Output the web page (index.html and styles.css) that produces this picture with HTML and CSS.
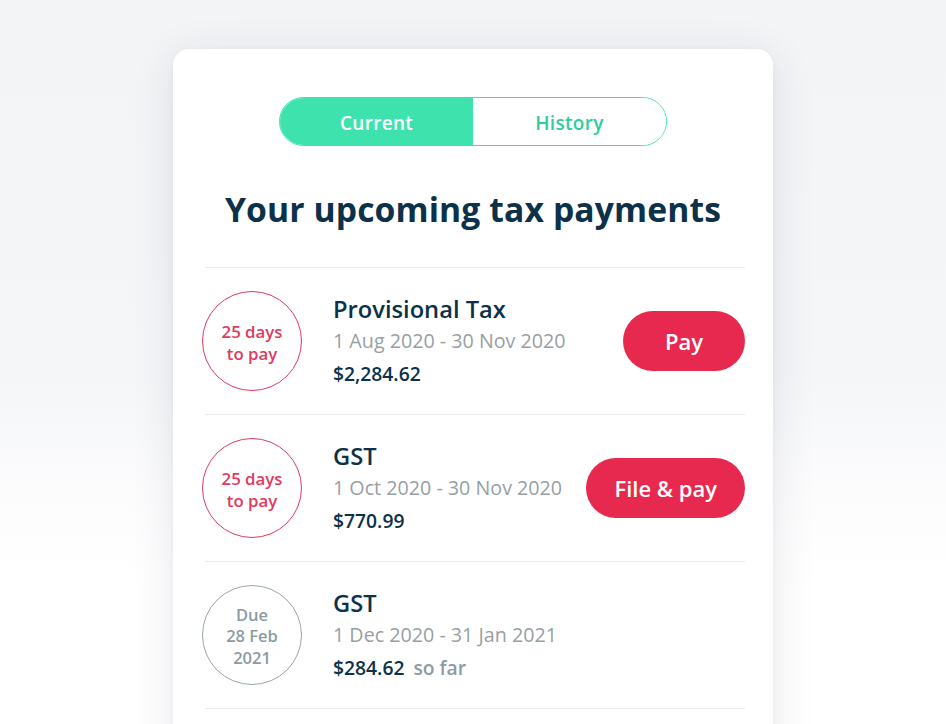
FILE: index.html
```html
<!DOCTYPE html>
<html lang="en">
<head>
<meta charset="utf-8">
<title>Tax payments</title>
<link rel="stylesheet" href="styles.css">
</head>
<body>
  <main class="stage">
    <section class="card">
      <div class="tabs">
        <button class="tab tab-active">Current</button>
        <button class="tab">History</button>
      </div>

      <h1 class="heading">Your upcoming tax payments</h1>

      <ul class="list">
        <li class="row">
          <div class="due due-urgent"><span>25 days</span><span>to pay</span></div>
          <div class="info">
            <div class="name">Provisional Tax</div>
            <div class="period">1 Aug 2020 - 30 Nov 2020</div>
            <div class="amount">$2,284.62</div>
          </div>
          <button class="action">Pay</button>
        </li>
        <li class="row">
          <div class="due due-urgent"><span>25 days</span><span>to pay</span></div>
          <div class="info">
            <div class="name">GST</div>
            <div class="period">1 Oct 2020 - 30 Nov 2020</div>
            <div class="amount">$770.99</div>
          </div>
          <button class="action">File &amp; pay</button>
        </li>
        <li class="row">
          <div class="due due-later"><span>Due</span><span>28 Feb</span><span>2021</span></div>
          <div class="info">
            <div class="name">GST</div>
            <div class="period">1 Dec 2020 - 31 Jan 2021</div>
            <div class="amount">$284.62 <span class="so-far">so far</span></div>
          </div>
        </li>
      </ul>
    </section>
  </main>
</body>
</html>
```

FILE: styles.css
```css
* {
  box-sizing: border-box;
}

html,
body {
  margin: 0;
  height: 100%;
}

body {
  font-family: "Open Sans", "Noto Sans", sans-serif;
  color: #0c3149;
  background: linear-gradient(180deg, #f3f4f6 0%, #f5f6f8 52%, #fcfcfd 68%, #ffffff 80%, #ffffff 100%);
  overflow: hidden;
}

.stage {
  display: flex;
  justify-content: center;
  padding-top: 49px;
  height: 100%;
}

.card {
  width: 600px;
  height: 720px;
  background: #ffffff;
  border-radius: 16px;
  box-shadow: 0 8px 44px rgba(40, 50, 70, 0.11), 0 1px 6px rgba(40, 50, 70, 0.05);
  padding: 48px 28px 0 32px;
}

/* segmented switch */
.tabs {
  width: 388px;
  height: 49px;
  margin: 0 auto;
  display: flex;
  border: 1.5px solid #3ee2ac;
  border-radius: 25px;
  overflow: hidden;
  transform: translateX(-2px);
}

.tab {
  flex: 1;
  border: 0;
  background: #ffffff;
  font-family: inherit;
  font-size: 19px;
  font-weight: 600;
  color: #2ccf9a;
  padding: 2px 0 0;
  letter-spacing: 0.3px;
}

.tab-active {
  background: #3ee2ac;
  color: #ffffff;
}

.heading {
  margin: 40px 0 0;
  text-align: center;
  font-size: 33.7px;
  font-weight: 700;
  line-height: 46px;
  letter-spacing: 0.1px;
  color: #0c3149;
  transform: translateX(-2px);
}

.list {
  list-style: none;
  margin: 35px 0 0;
  padding: 0;
  border-top: 1px solid #e9ebed;
}

.row {
  height: 147px;
  display: flex;
  align-items: center;
  border-bottom: 1px solid #e9ebed;
}

.due {
  width: 100px;
  height: 100px;
  border-radius: 50%;
  border: 1.5px solid currentColor;
  display: flex;
  flex-direction: column;
  align-items: center;
  justify-content: center;
  font-size: 16.8px;
  font-weight: 600;
  line-height: 21.5px;
  padding-top: 3px;
  margin-left: -3px;
  flex: none;
}

.due-urgent {
  color: #df3a60;
}

.due-later {
  color: #8c9ba1;
  border-color: #98a6ab;
  font-size: 16.5px;
  padding-top: 2px;
}

.info {
  flex: 1;
  margin-left: 31px;
  padding-top: 2px;
}

.name {
  font-size: 23.7px;
  font-weight: 600;
  line-height: 32px;
  color: #0c3149;
}

.period {
  font-size: 19.7px;
  font-weight: 400;
  line-height: 32px;
  color: #979fa4;
}

.amount {
  font-size: 19.3px;
  font-weight: 600;
  line-height: 34px;
  color: #0c3149;
}

.so-far {
  color: #8c9ba1;
  margin-left: 4px;
}

.action {
  height: 60px;
  min-width: 122px;
  padding: 0 28px;
  border: 0;
  border-radius: 30px;
  background: #e8294f;
  color: #ffffff;
  font-family: inherit;
  font-size: 22px;
  font-weight: 600;
  flex: none;
}
```
